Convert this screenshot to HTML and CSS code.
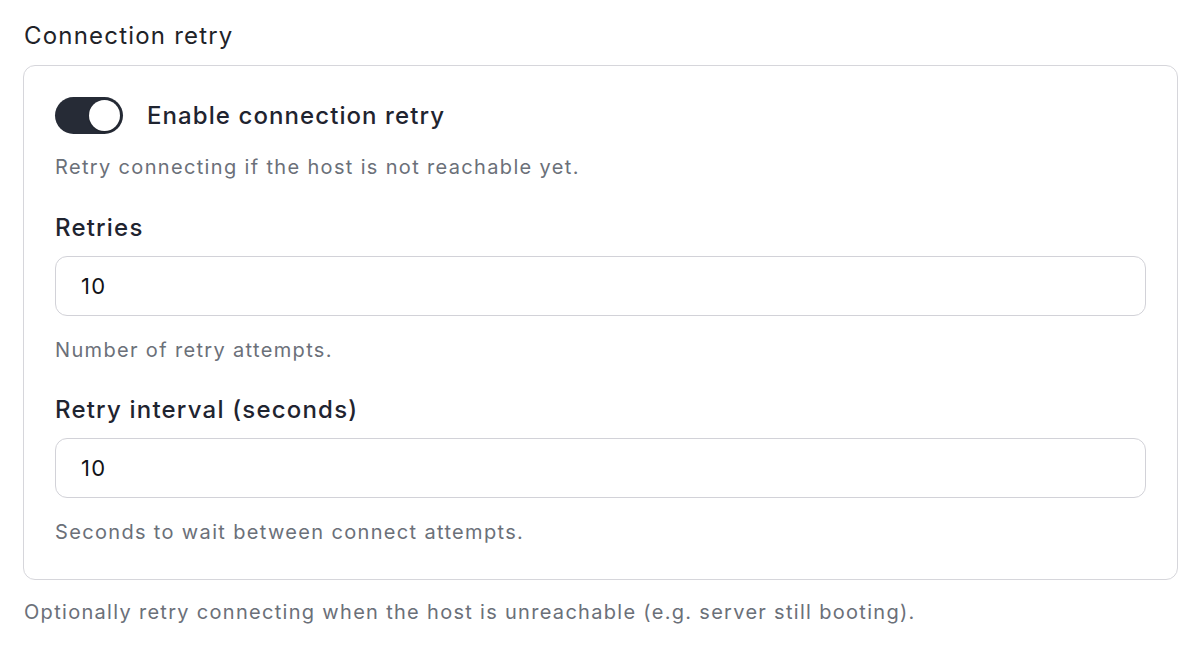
FILE: index.html
```html
<!DOCTYPE html>
<html lang="en">
<head>
<meta charset="utf-8">
<title>Connection retry</title>
<link rel="stylesheet" href="styles.css">
</head>
<body>
<div class="page">
  <h2 class="section-title">Connection retry</h2>
  <div class="card">
    <label class="toggle-row">
      <span class="toggle"><span class="knob"></span></span>
      <span class="toggle-label">Enable connection retry</span>
    </label>
    <p class="help first">Retry connecting if the host is not reachable yet.</p>

    <div class="field">
      <label class="field-label">Retries</label>
      <div class="input">10</div>
      <p class="help">Number of retry attempts.</p>
    </div>

    <div class="field">
      <label class="field-label">Retry interval (seconds)</label>
      <div class="input">10</div>
      <p class="help">Seconds to wait between connect attempts.</p>
    </div>
  </div>
  <p class="footer-help">Optionally retry connecting when the host is unreachable (e.g. server still booting).</p>
</div>
</body>
</html>
```

FILE: styles.css
```css
* { box-sizing: border-box; }
html, body { margin: 0; padding: 0; background: #ffffff; }
body {
  font-family: Inter, "Noto Sans", "Liberation Sans", sans-serif;
  color: #1f2328;
}
.page {
  padding: 20px 22px 0 23px;
}
.section-title {
  margin: 0 0 13px 1px;
  font-size: 24px;
  line-height: 32px;
  font-weight: 400;
  letter-spacing: 0.05em;
  color: #1f2328;
}
.card {
  border: 1.5px solid #d6d6db;
  border-radius: 12px;
  padding: 31px 31px 33px 31px;
}
.toggle-row {
  display: flex;
  align-items: center;
  gap: 24px;
  height: 37px;
}
.toggle {
  width: 68px;
  height: 37px;
  border-radius: 19px;
  background: #262b36;
  display: flex;
  align-items: center;
  justify-content: flex-end;
  padding-right: 3px;
  flex: none;
}
.knob {
  width: 31px;
  height: 31px;
  border-radius: 50%;
  background: #ffffff;
  box-shadow: 0 1px 2px rgba(0,0,0,0.25);
}
.toggle-label {
  font-size: 24px;
  font-weight: 500;
  letter-spacing: 0.045em;
  color: #1f2430;
}
.help {
  margin: 19px 0 0 0;
  font-size: 20px;
  line-height: 28px;
  letter-spacing: 0.067em;
  color: #6b7079;
}
.help.first { margin-top: 19px; }
.field { margin-top: 31px; }
.field + .field { margin-top: 30px; }
.field-label {
  display: block;
  font-size: 24px;
  line-height: 32px;
  font-weight: 500;
  letter-spacing: 0.05em;
  color: #1f2430;
}
.input {
  margin-top: 12px;
  height: 60px;
  border: 1.5px solid #d2d2d8;
  border-radius: 12px;
  padding: 0 25px;
  display: flex;
  align-items: center;
  font-size: 22px;
  letter-spacing: 0.06em;
  color: #111318;
  background: #fff;
}
.field .help { margin-top: 20px; }
.footer-help {
  margin: 18px 0 0 1px;
  font-size: 20px;
  line-height: 28px;
  letter-spacing: 0.065em;
  color: #6b7079;
}
```
